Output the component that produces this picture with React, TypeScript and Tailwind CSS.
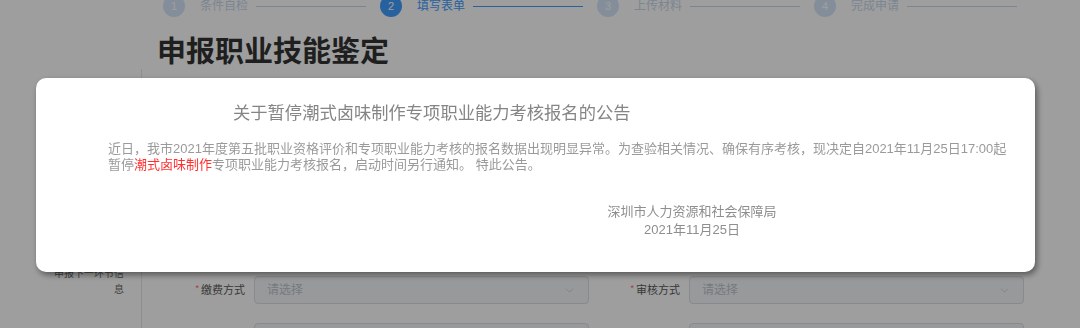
import React from 'react';
import { ChevronDown } from 'lucide-react';

const steps = [
  { no: 1, label: '条件自检', state: 'done' },
  { no: 2, label: '填写表单', state: 'active' },
  { no: 3, label: '上传材料', state: 'todo' },
  { no: 4, label: '完成申请', state: 'todo' },
];

const Field = ({ label }: { label: string }) => (
  <div className="flex items-center h-[28px]">
    <label className="w-[100px] pr-[9px] text-right text-[11px] text-[#5a5a5a]">
      <span className="text-[#f56c6c] mr-[2px] text-[9px] align-top">*</span>
      {label}
    </label>
    <div className="flex-1 h-[28px] flex items-center justify-between px-[12px] bg-[#f5f7fa] border border-[#dcdfe6] rounded-[4px]">
      <span className="text-[12px] text-[#c0c4cc]">请选择</span>
      <ChevronDown size={13} strokeWidth={1.2} className="text-[#c0c4cc]" />
    </div>
  </div>
);

export default function App() {
  return (
    <div
      className="relative w-full h-[328px] overflow-hidden bg-white"
      style={{ fontFamily: '"Liberation Sans", "Noto Sans CJK SC", sans-serif' }}
    >
      {/* page under the dialog */}
      <div className="flex -mt-[5px] pl-[163px] h-[22px] items-center">
        {steps.map((s) => (
          <div key={s.no} className="flex items-center w-[217px] pr-[14px]">
            <div
              className={`w-[22px] h-[22px] rounded-full flex items-center justify-center text-[11px] text-white shrink-0 ${
                s.state === 'active' ? 'bg-[#409eff]' : 'bg-[#d6e6f8]'
              }`}
            >
              {s.no}
            </div>
            <span
              className={`ml-[15px] text-[12px] whitespace-nowrap ${
                s.state === 'active' ? 'text-[#409eff]' : 'text-[#c8d8ec]'
              }`}
            >
              {s.label}
            </span>
            <div
              className={`ml-[8px] flex-1 h-px ${
                s.state === 'active' ? 'bg-[#409eff]' : 'bg-[#c8d8ec]'
              }`}
            />
          </div>
        ))}
      </div>

      <h1 className="mt-[18px] pl-[157px] text-[29px] leading-[34px] font-bold text-[#333]">
        申报职业技能鉴定
      </h1>

      <div className="flex">
        <div className="w-[142px] border-r border-[#e6e6e6] shrink-0">
          <div className="h-[197px] pt-[9px] flex justify-end pr-[17px]">
            <div className="w-[72px] text-right text-[10px] leading-[16px] text-[#666]">申报人信息</div>
          </div>
          <div className="flex justify-end pr-[17px]">
            <div className="w-[72px] text-right text-[10px] leading-[16px] text-[#666]">申报下一环节信息</div>
          </div>
        </div>
        <div className="flex-1 pl-[12px]">
          <div className="h-[197px] pt-[9px] grid grid-cols-[435px_435px] gap-y-[19px] content-start">
            <Field label="姓名" />
            <Field label="证件号码" />
            <Field label="职业工种" />
            <Field label="申报等级" />
            <Field label="鉴定方式" />
            <Field label="考核地点" />
          </div>
          <div className="pt-[10px] grid grid-cols-[435px_435px] gap-y-[19px] content-start">
            <Field label="缴费方式" />
            <Field label="审核方式" />
            <Field label="培训机构" />
            <Field label="鉴定机构" />
          </div>
        </div>
      </div>

      {/* shade */}
      <div className="fixed inset-0 bg-black/[0.38]" />

      {/* notice dialog */}
      <div className="fixed left-[36px] top-[78px] w-[999px] h-[194px] bg-white rounded-[10px] shadow-[2px_3px_6px_rgba(0,0,0,0.45)]">
        <h2 className="mt-[23px] pl-[197px] text-[17.3px] leading-[24px] text-[#858585]">
          关于暂停潮式卤味制作专项职业能力考核报名的公告
        </h2>
        <p className="mt-[16px] pl-[72px] text-[13px] leading-[16px] text-[#9a9a9a] whitespace-nowrap">
          近日，我市2021年度第五批职业资格评价和专项职业能力考核的报名数据出现明显异常。为查验相关情况、确保有序考核，现决定自2021年11月25日17:00起
          <br />
          暂停<span className="text-[#ff3030]">潮式卤味制作</span>专项职业能力考核报名，启动时间另行通知。 特此公告。
        </p>
        <div className="mt-[30px] flex justify-end pr-[243px]">
          <div className="w-[200px] text-center text-[13px] leading-[18px] text-[#8e8e8e]">
            <div>深圳市人力资源和社会保障局</div>
            <div>2021年11月25日</div>
          </div>
        </div>
      </div>
    </div>
  );
}
